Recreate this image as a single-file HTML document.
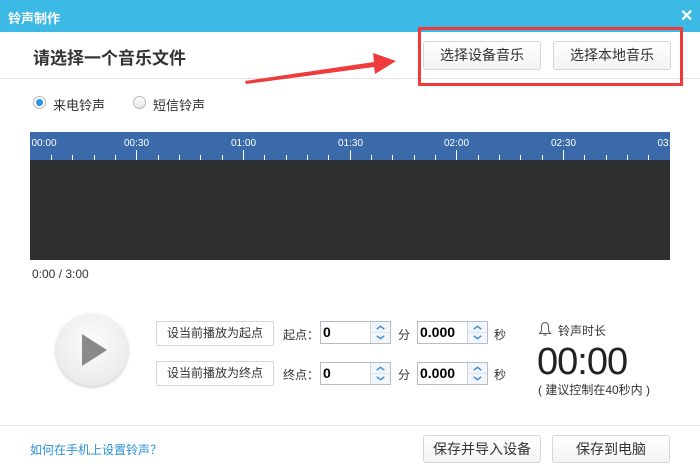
<!DOCTYPE html>
<html><head><meta charset="utf-8"><style>
*{margin:0;padding:0;box-sizing:border-box}
body{width:700px;height:475px;position:relative;background:#fff;font-family:"Liberation Sans","Noto Sans CJK SC",sans-serif;color:#333;overflow:hidden}
.a{position:absolute}
.btn{position:absolute;border:1px solid #d6d6d6;border-radius:3px;background:linear-gradient(#fff,#f3f3f3);font-size:14px;text-align:center;color:#333}
.sbtn{position:absolute;border:1px solid #d6d6d6;border-radius:2px;background:#fff;font-size:12px;text-align:center;line-height:22px}
.inp{position:absolute;width:71px;height:23px;border:1px solid #b5bcc6;background:#fff;font-size:14px;font-weight:bold;color:#000;padding-left:2px;line-height:20px}
.spin{position:absolute;right:0;top:0;width:20px;height:21px;border-left:1px solid #c9d4e0;background:#f2f6fa}
.t{font-size:12px}
</style></head><body>
<div class="a" style="left:0;top:0;width:700px;height:32px;background:#3db9e6"></div>
<div class="a" style="left:8px;top:8px;font-size:13px;color:#fff;font-weight:bold">铃声制作</div>
<div class="a" style="left:680px;top:6px;font-size:16px;color:#fff;font-weight:bold">✕</div>
<div class="a" style="left:33px;top:44px;font-size:17px;font-weight:bold;color:#333">请选择一个音乐文件</div>
<div class="a" style="left:0;top:78px;width:700px;height:1px;background:#e2e2e2"></div>
<div class="btn" style="left:423px;top:41px;width:118px;height:29px;line-height:27px">选择设备音乐</div>
<div class="btn" style="left:553px;top:41px;width:118px;height:29px;line-height:27px">选择本地音乐</div>
<div class="a" style="left:418px;top:27px;width:265px;height:59px;border:3px solid #f03a3a"></div>
<svg class="a" style="left:0;top:0" width="420" height="100"><polygon points="245,81 374,62 373,53 396,61 375,74 374,67 246,84" fill="#ef3b3b"/></svg>
<div class="a" style="left:33px;top:96px;width:13px;height:13px;border-radius:50%;border:1px solid #b8b8b8;background:#fff"><div style="margin:2px;width:7px;height:7px;border-radius:50%;background:#2a95e6"></div></div>
<div class="a t" style="left:53px;top:95px;font-size:13px">来电铃声</div>
<div class="a" style="left:133px;top:96px;width:13px;height:13px;border-radius:50%;border:1px solid #b8b8b8;background:linear-gradient(#fff,#e6e6e6)"></div>
<div class="a t" style="left:153px;top:95px;font-size:13px">短信铃声</div>
<svg class="a" style="left:0;top:132px" width="700" height="128">
<rect x="30" y="0" width="640" height="28" fill="#3a6aaa"/>
<rect x="30" y="28" width="640" height="100" fill="#2e2f31"/>
<g stroke="#fff" stroke-width="1">
<line x1="51.5" y1="23" x2="51.5" y2="28"/><line x1="72.5" y1="23" x2="72.5" y2="28"/><line x1="94.5" y1="23" x2="94.5" y2="28"/><line x1="115.5" y1="23" x2="115.5" y2="28"/><line x1="136.5" y1="18" x2="136.5" y2="28"/>
<line x1="158.5" y1="23" x2="158.5" y2="28"/><line x1="179.5" y1="23" x2="179.5" y2="28"/><line x1="200.5" y1="23" x2="200.5" y2="28"/><line x1="222.5" y1="23" x2="222.5" y2="28"/><line x1="243.5" y1="18" x2="243.5" y2="28"/>
<line x1="264.5" y1="23" x2="264.5" y2="28"/><line x1="286.5" y1="23" x2="286.5" y2="28"/><line x1="307.5" y1="23" x2="307.5" y2="28"/><line x1="328.5" y1="23" x2="328.5" y2="28"/><line x1="350.5" y1="18" x2="350.5" y2="28"/>
<line x1="371.5" y1="23" x2="371.5" y2="28"/><line x1="392.5" y1="23" x2="392.5" y2="28"/><line x1="414.5" y1="23" x2="414.5" y2="28"/><line x1="435.5" y1="23" x2="435.5" y2="28"/><line x1="456.5" y1="18" x2="456.5" y2="28"/>
<line x1="478.5" y1="23" x2="478.5" y2="28"/><line x1="499.5" y1="23" x2="499.5" y2="28"/><line x1="520.5" y1="23" x2="520.5" y2="28"/><line x1="542.5" y1="23" x2="542.5" y2="28"/><line x1="563.5" y1="18" x2="563.5" y2="28"/>
<line x1="584.5" y1="23" x2="584.5" y2="28"/><line x1="606.5" y1="23" x2="606.5" y2="28"/><line x1="627.5" y1="23" x2="627.5" y2="28"/><line x1="648.5" y1="23" x2="648.5" y2="28"/>
</g>
<g fill="#fff" font-size="10" font-family="Liberation Sans" text-anchor="middle">
<text x="44" y="14">00:00</text><text x="136.5" y="14">00:30</text><text x="243.5" y="14">01:00</text><text x="350.5" y="14">01:30</text><text x="456.5" y="14">02:00</text><text x="563.5" y="14">02:30</text><text x="670" y="14">03:00</text>
</g>
</svg>
<div class="a" style="left:32px;top:267px;font-size:12px">0:00 / 3:00</div>
<div class="a" style="left:56px;top:314px;width:72px;height:72px;border-radius:50%;background:radial-gradient(circle at 50% 40%,#fdfdfd,#e4e4e4);box-shadow:0 1px 3px rgba(0,0,0,.25)"></div>
<svg class="a" style="left:80px;top:334px" width="30" height="32"><polygon points="2,0 27,16 2,32" fill="#8a8a8a"/></svg>
<div class="sbtn" style="left:156px;top:321px;width:118px;height:25px">设当前播放为起点</div>
<div class="sbtn" style="left:156px;top:361px;width:118px;height:25px">设当前播放为终点</div>
<div class="a t" style="left:283px;top:326px">起点：</div>
<div class="a t" style="left:283px;top:366px">终点：</div>
<div class="inp" style="left:320px;top:321px">0<svg class="spin" viewBox="0 0 20 21"><line x1="0" y1="10.5" x2="20" y2="10.5" stroke="#dde5ee"/><path d="M6 7l4-3 4 3M6 14l4 3 4-3" fill="none" stroke="#3a8fd9" stroke-width="1.5"/></svg></div>
<div class="inp" style="left:417px;top:321px">0.000<svg class="spin" viewBox="0 0 20 21"><line x1="0" y1="10.5" x2="20" y2="10.5" stroke="#dde5ee"/><path d="M6 7l4-3 4 3M6 14l4 3 4-3" fill="none" stroke="#3a8fd9" stroke-width="1.5"/></svg></div>
<div class="inp" style="left:320px;top:362px">0<svg class="spin" viewBox="0 0 20 21"><line x1="0" y1="10.5" x2="20" y2="10.5" stroke="#dde5ee"/><path d="M6 7l4-3 4 3M6 14l4 3 4-3" fill="none" stroke="#3a8fd9" stroke-width="1.5"/></svg></div>
<div class="inp" style="left:417px;top:362px">0.000<svg class="spin" viewBox="0 0 20 21"><line x1="0" y1="10.5" x2="20" y2="10.5" stroke="#dde5ee"/><path d="M6 7l4-3 4 3M6 14l4 3 4-3" fill="none" stroke="#3a8fd9" stroke-width="1.5"/></svg></div>
<div class="a t" style="left:398px;top:326px">分</div><div class="a t" style="left:398px;top:366px">分</div>
<div class="a t" style="left:494px;top:326px">秒</div><div class="a t" style="left:494px;top:366px">秒</div>
<svg class="a" style="left:538px;top:321px" width="14" height="16"><path d="M7 1.5C4.5 1.5 3.5 3.5 3.5 6v4L1.5 12.5h11L10.5 10V6c0-2.5-1-4.5-3.5-4.5zM5.5 14h3" fill="none" stroke="#555" stroke-width="1"/></svg>
<div class="a t" style="left:558px;top:322px">铃声时长</div>
<div class="a" style="left:537px;top:341px;font-size:38px;color:#222;letter-spacing:-1px">00:00</div>
<div class="a" style="left:538px;top:381px;font-size:12px">( 建议控制在40秒内 )</div>
<div class="a" style="left:0;top:425px;width:700px;height:1px;background:#e2e2e2"></div>
<div class="a" style="left:30px;top:441px;font-size:12px;color:#2a8fd6">如何在手机上设置铃声？</div>
<div class="btn" style="left:423px;top:435px;width:118px;height:28px;line-height:26px">保存并导入设备</div>
<div class="btn" style="left:552px;top:435px;width:118px;height:28px;line-height:26px">保存到电脑</div>
</body></html>
